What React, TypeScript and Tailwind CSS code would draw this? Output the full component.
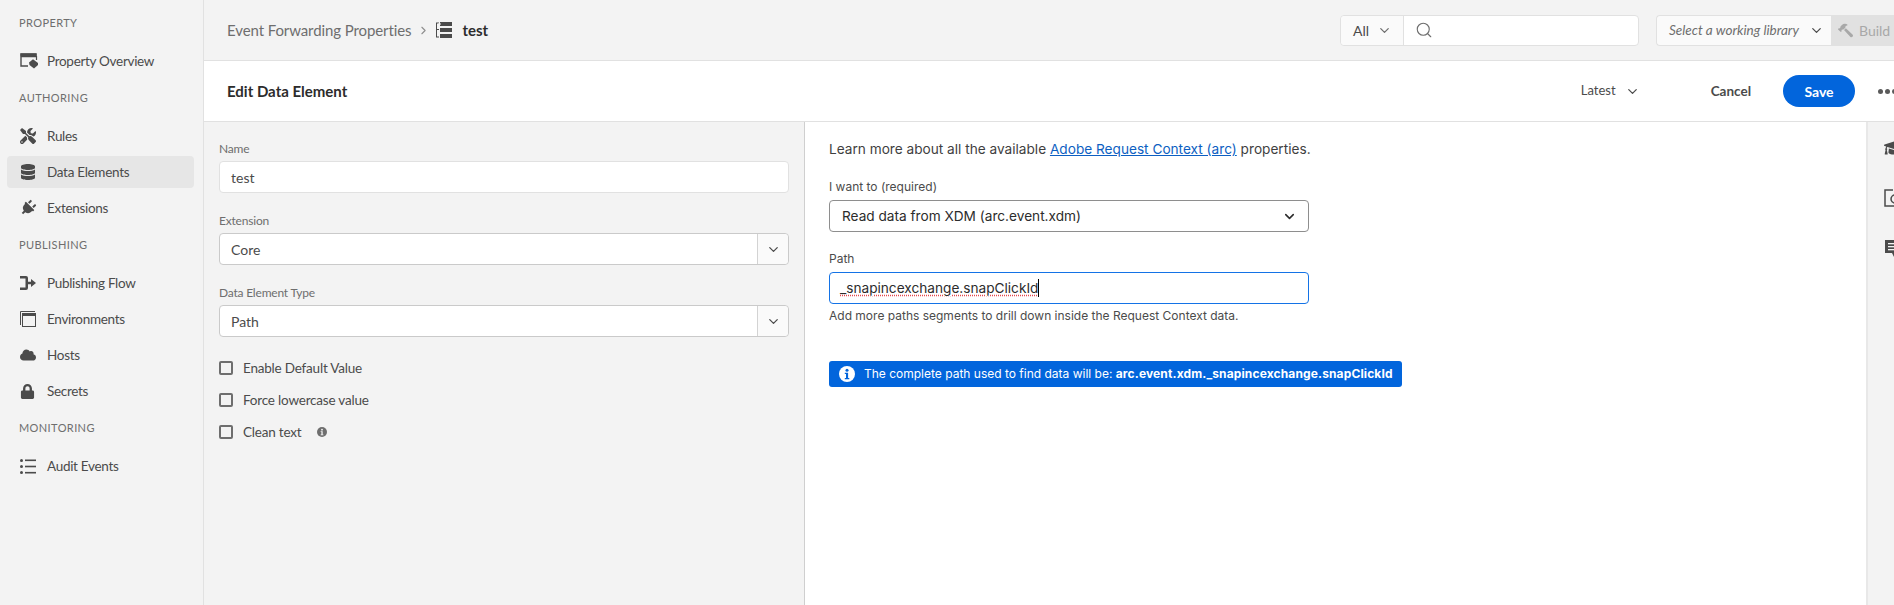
import { ChevronDown, ChevronRight, Search } from 'lucide-react';
import { FaCloud, FaDatabase, FaGraduationCap, FaLock, FaPlug, FaTools, FaHammer } from 'react-icons/fa';

const OverviewIcon = () => (
  <svg width="18" height="16" viewBox="0 0 18 16" fill="none">
    <path d="M1 1h15v2.5H1zM1 3v10h7" stroke="#4b4b4b" strokeWidth="1.4" />
    <rect x="0.5" y="0.5" width="16" height="3" fill="#4b4b4b" />
    <path d="M16.5 3v4" stroke="#4b4b4b" strokeWidth="1.2" />
    <path d="M9 9.5l4-3.2 5 3.6v2.2L14 15.5 9.5 12z" fill="#4b4b4b" />
  </svg>
);

const FlowIcon = () => (
  <svg width="16" height="14" viewBox="0 0 16 14" fill="#4b4b4b">
    <path d="M0 0h6a2 2 0 0 1 2 2v3.7h3V3l5 4-5 4V8.300H8V12a2 2 0 0 1-2 2H0v-2.500h5.500v-9H0z" />
  </svg>
);

const EnvIcon = () => (
  <svg width="16" height="16" viewBox="0 0 16 16" fill="none" stroke="#4b4b4b">
    <path d="M0.500 14V0.500H15" strokeWidth="1" />
    <rect x="2.500" y="2.500" width="13" height="13" strokeWidth="1" />
    <rect x="2.500" y="2.500" width="13" height="2" fill="#4b4b4b" strokeWidth="1" />
  </svg>
);

const AuditIcon = () => (
  <svg width="16" height="15" viewBox="0 0 16 15" fill="#4b4b4b">
    <circle cx="1.500" cy="1.500" r="1.500" />
    <circle cx="1.500" cy="7.500" r="1.500" />
    <circle cx="1.500" cy="13.500" r="1.500" />
    <rect x="5" y="0.500" width="11" height="1.600" />
    <rect x="5" y="6.700" width="11" height="1.600" />
    <rect x="5" y="12.900" width="11" height="1.600" />
  </svg>
);

const TreeIcon = () => (
  <svg width="16" height="16" viewBox="0 0 16 16" fill="#4b4b4b">
    <path d="M0 0.500h3v1H1V7h2v1H1v6.500h2v1H0z" />
    <rect x="4" y="0" width="12" height="4" />
    <rect x="4" y="6" width="12" height="4" />
    <rect x="4" y="12" width="12" height="4" />
    <rect x="2" y="1.500" width="3" height="1" fill="#f3f3f3" />
  </svg>
);

const InfoDot = ({ size, bg, fg }: { size: number; bg: string; fg: string }) => (
  <svg width={size} height={size} viewBox="0 0 16 16">
    <circle cx="8" cy="8" r="8" fill={bg} />
    <circle cx="8" cy="4.200" r="1.500" fill={fg} />
    <path d="M5.800 6.800h3.300v5.200h1.200v1.300H5.800V12h1.200V8.100H5.800z" fill={fg} />
  </svg>
);

const AnnotateIcon = () => (
  <svg width="20" height="18" viewBox="0 0 20 18" fill="none" stroke="#4b4b4b" strokeWidth="1.500">
    <path d="M9 1H1v16h16v-6" />
    <circle cx="11" cy="10" r="4" />
  </svg>
);

const CommentIcon = () => (
  <svg width="20" height="20" viewBox="0 0 20 20" fill="#4b4b4b">
    <path d="M1 1h18v13h-7l-2 4-2-4H1z" />
    <rect x="4" y="4" width="12" height="1.300" fill="#f3f3f3" />
    <rect x="4" y="7" width="12" height="1.300" fill="#f3f3f3" />
    <rect x="4" y="10" width="12" height="1.300" fill="#f3f3f3" />
  </svg>
);

const navGroups = [
  { label: 'Property', items: [{ name: 'Property Overview', icon: <OverviewIcon /> }] },
  {
    label: 'Authoring',
    items: [
      { name: 'Rules', icon: <FaTools size={16} /> },
      { name: 'Data Elements', icon: <FaDatabase size={16} />, active: true },
      { name: 'Extensions', icon: <FaPlug size={16} className="rotate-45" /> },
    ],
  },
  {
    label: 'Publishing',
    items: [
      { name: 'Publishing Flow', icon: <FlowIcon /> },
      { name: 'Environments', icon: <EnvIcon /> },
      { name: 'Hosts', icon: <FaCloud size={16} /> },
      { name: 'Secrets', icon: <FaLock size={15} /> },
    ],
  },
  { label: 'Monitoring', items: [{ name: 'Audit Events', icon: <AuditIcon /> }] },
];

const Sidebar = () => (
  <aside className="w-[204px] shrink-0 border-r border-[#e1e1e1] bg-[#f3f3f3] pt-[4px]">
    {navGroups.map((group) => (
      <div key={group.label}>
        <div className="flex h-[39px] items-center pl-[19px] text-[11px] uppercase tracking-[0.4px] text-[#6e6e6e]">
          {group.label}
        </div>
        {group.items.map((item) => (
          <div key={item.name} className="py-[2px] pl-[7px] pr-[9px]">
            <div
              className={`flex h-[32px] items-center rounded-[4px] pl-[13px] text-[13.500px] tracking-[-0.3px] text-[#4b4b4b] ${
                item.active ? 'bg-[#e6e6e6]' : ''
              }`}
            >
              <span className="flex w-[27px] shrink-0 items-center">{item.icon}</span>
              {item.name}
            </div>
          </div>
        ))}
      </div>
    ))}
  </aside>
);

const Field = ({ label, children }: { label: string; children: React.ReactNode }) => (
  <div className="mb-[19px]">
    <div className="mb-[3px] flex h-[18px] items-center text-[12px] tracking-[-0.2px] text-[#6e6e6e]">{label}</div>
    {children}
  </div>
);

const Combo = ({ value }: { value: string }) => (
  <div className="flex h-[32px] items-center rounded-[4px] border border-[#cacaca] bg-white text-[14px] text-[#4b4b4b]">
    <span className="flex-1 pl-[11px]">{value}</span>
    <span className="flex h-full w-[31px] items-center justify-center rounded-r-[4px] border-l border-[#d3d3d3] bg-[#fafafa]">
      <ChevronDown size={15} strokeWidth={2} />
    </span>
  </div>
);

const Check = ({ label, info }: { label: string; info?: boolean }) => (
  <div className="flex h-[32px] items-center">
    <span className="h-[14px] w-[14px] rounded-[2px] border-2 border-[#6e6e6e] bg-[#f3f3f3]" />
    <span className="ml-[10px] text-[13.500px] tracking-[-0.2px] text-[#4b4b4b]">{label}</span>
    {info && (
      <span className="ml-[16px] flex">
        <InfoDot size={10} bg="#6e6e6e" fg="#f3f3f3" />
      </span>
    )}
  </div>
);

export default function App() {
  return (
    <div className="flex h-[605px] w-[1894px] overflow-hidden bg-[#f3f3f3] font-['Lato','Noto_Sans',sans-serif]">
      <Sidebar />
      <main className="flex min-w-0 flex-1 flex-col">
        {/* Top bar */}
        <header className="flex h-[61px] shrink-0 items-center border-b border-[#e1e1e1] pl-[23px]">
          <span className="whitespace-nowrap text-[15px] tracking-[-0.1px] text-[#6e6e6e]">Event Forwarding Properties</span>
          <ChevronRight size={13} className="ml-[6px] text-[#8e8e8e]" />
          <span className="ml-[6px] flex">
            <TreeIcon />
          </span>
          <span className="ml-[10px] text-[15px] font-bold text-[#2c2c2c]">test</span>
          <div className="ml-auto flex h-[31px] w-[299px] items-center rounded-[4px] border border-[#e1e1e1] bg-white text-[14px] text-[#4b4b4b]">
            <span className="flex h-full w-[63px] items-center rounded-l-[4px] border-r border-[#e1e1e1] bg-[#fafafa] pl-[12px]">
              All
              <ChevronDown size={15} className="ml-[8px] text-[#6e6e6e]" />
            </span>
            <Search size={18} strokeWidth={1.500} className="ml-[11px] text-[#6e6e6e]" />
          </div>
          <div className="ml-[17px] flex h-[31px] w-[238px] items-center">
            <div className="flex h-full w-[175px] items-center rounded-l-[4px] border border-r-0 border-[#e1e1e1] bg-[#fafafa] pl-[12px] text-[13.500px] italic text-[#6e6e6e]">
              Select a working library
              <ChevronDown size={15} className="ml-[10px] text-[#4b4b4b]" />
            </div>
            <div className="flex h-full flex-1 items-center bg-[#e1e1e1] pl-[7px] text-[14px] text-[#a8a8a8]">
              <FaHammer size={15} className="mr-[6px] -scale-x-100" />
              Build
            </div>
          </div>
        </header>

        {/* Edit bar */}
        <div className="flex h-[61px] shrink-0 items-center border-b border-[#e1e1e1] bg-white pl-[23px]">
          <h1 className="text-[15px] font-bold text-[#2c2c2c]">Edit Data Element</h1>
          <span className="ml-auto text-[13px] text-[#4b4b4b]">Latest</span>
          <ChevronDown size={15} className="ml-[9px] text-[#4b4b4b]" />
          <button className="ml-[71px] text-[13.500px] font-bold text-[#4b4b4b]">Cancel</button>
          <button className="ml-[32px] h-[32px] w-[72px] rounded-[16px] bg-[#0265dc] text-[14px] font-bold text-white">
            Save
          </button>
          <span className="ml-[23px] flex w-[16px] shrink-0 gap-[2px]">
            <span className="h-[5px] w-[5px] shrink-0 rounded-full bg-[#5a5a5a]" />
            <span className="h-[5px] w-[5px] shrink-0 rounded-full bg-[#5a5a5a]" />
            <span className="h-[5px] w-[5px] shrink-0 rounded-full bg-[#5a5a5a]" />
          </span>
        </div>

        <div className="flex min-h-0 flex-1">
          {/* Settings form */}
          <section className="w-[601px] shrink-0 border-r border-[#cfcfcf] px-[15px] pt-[18px]">
            <Field label="Name">
              <div className="flex h-[32px] items-center rounded-[4px] border border-[#e1e1e1] bg-white pl-[11px] text-[14px] text-[#4b4b4b]">
                test
              </div>
            </Field>
            <Field label="Extension">
              <Combo value="Core" />
            </Field>
            <div className="-mb-[4px]">
              <Field label="Data Element Type">
                <Combo value="Path" />
              </Field>
            </div>
            <Check label="Enable Default Value" />
            <Check label="Force lowercase value" />
            <Check label="Clean text" info />
          </section>

          {/* Extension view */}
          <section className="flex-1 bg-white pl-[24px] pt-[18px] font-['Inter',sans-serif] text-[#4b4b4b]">
            <p className="flex h-[18px] items-center whitespace-pre text-[13.650px] text-[#3f3f3f]">
              Learn more about all the available <a className="text-[#0d5fc2] underline">Adobe Request Context (arc)</a> properties.
            </p>
            <div className="mt-[20px] flex h-[18px] items-center text-[12px]">I want to (required)</div>
            <div className="mt-[4px] flex h-[32px] w-[480px] items-center justify-between rounded-[4px] border border-[#8e8e8e] px-[12px] text-[13.650px] text-[#2c2c2c]">
              Read data from XDM (arc.event.xdm)
              <ChevronDown size={15} strokeWidth={2.500} className="-mr-[1px]" />
            </div>
            <div className="mt-[18px] flex h-[18px] items-center text-[12px]">Path</div>
            <div className="mt-[4px] flex h-[32px] w-[480px] items-center rounded-[4px] border border-[#1473e6] px-[10px] text-[13.650px] text-[#2c2c2c]">
              <span className="underline decoration-dotted decoration-[#e5484d] underline-offset-2">
                _snapincexchange.snapClickId
              </span>
              <span className="h-[18px] w-px bg-black" />
            </div>
            <div className="mt-[3px] flex h-[18px] items-center text-[12px]">
              Add more paths segments to drill down inside the Request Context data.
            </div>
            <div className="mt-[36px] flex h-[26px] w-fit items-center rounded-[3px] bg-[#0265dc] pl-[10px] pr-[9px] text-[12px] text-white">
              <InfoDot size={16} bg="#ffffff" fg="#0265dc" />
              <span className="ml-[9px]">
                The complete path used to find data will be: <b className="tracking-[0.13px]">arc.event.xdm._snapincexchange.snapClickId</b>
              </span>
            </div>
          </section>

          {/* Right rail */}
          <aside className="flex w-[28px] shrink-0 flex-col gap-[30px] overflow-hidden border-l-2 border-[#e8e8e8] pl-[16px] pt-[15px]">
            <span className="shrink-0">
              <FaGraduationCap size={22} className="text-[#4b4b4b]" />
            </span>
            <span className="shrink-0">
              <AnnotateIcon />
            </span>
            <span className="mt-[2px] shrink-0">
              <CommentIcon />
            </span>
          </aside>
        </div>
      </main>
    </div>
  );
}
